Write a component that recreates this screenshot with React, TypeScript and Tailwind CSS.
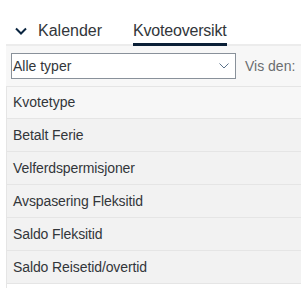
const rows = ["Betalt Ferie", "Velferdspermisjoner", "Avspasering Fleksitid", "Saldo Fleksitid", "Saldo Reisetid/overtid"];

const App = () => {
  return (
    <div className="w-[301px] h-[288px] bg-white flex overflow-hidden font-['Liberation_Sans',Arial,sans-serif] text-[#32363a]">
      <div className="ml-[6px] flex-1 flex flex-col">
        {/* tabs */}
        <div className="h-[46px] flex items-end border-b-[2px] border-[#ececec] pl-[9px]">
          <div className="flex items-end h-[44px] -mb-[2px] pb-[3px] border-b-[2px] border-transparent">
            <svg width="12" height="8" viewBox="0 0 12 8" className="mr-[11px] mb-[6px]">
              <path d="M1 1.5 L6 6.5 L11 1.5" fill="none" stroke="#0a2540" strokeWidth="2" />
            </svg>
            <span className="text-[16px] leading-[20px]">Kalender</span>
          </div>
          <div className="ml-[31px] flex items-end h-[44px] -mb-[2px] pb-[2px] border-b-[3px] border-[#0a1f36]">
            <span className="text-[16px] leading-[20px] tracking-[-0.2px]">Kvoteoversikt</span>
          </div>
        </div>
        {/* toolbar */}
        <div className="bg-[#f7f7f7] flex items-center pl-[5px] pt-[7px] pb-[7px]">
          <div className="w-[225px] h-[26px] bg-white border border-[#89919a] flex items-center justify-between pl-[1px] pr-[6px]">
            <span className="text-[14px]">Alle typer</span>
            <svg width="10" height="6" viewBox="0 0 10 6">
              <path d="M0.5 0.5 L5 5 L9.5 0.5" fill="none" stroke="#5b738b" strokeWidth="1" />
            </svg>
          </div>
          <span className="ml-[9px] text-[14px] text-[#6a6d70] whitespace-nowrap">Vis den:</span>
        </div>
        {/* table */}
        <div className="border-l border-[#e5e5e5]">
          <div className="h-[32px] bg-[#f7f7f7] border-t border-[#e5e5e5] flex items-center pl-[6px] text-[14px]">
            Kvotetype
          </div>
          {rows.map((r) => (
            <div key={r} className="h-[33px] bg-[#f2f2f2] border-t border-[#e5e5e5] flex items-center pl-[6px] text-[14px] tracking-[-0.1px]">
              {r}
            </div>
          ))}
          <div className="border-t border-[#e5e5e5] h-[5px] bg-white" />
        </div>
      </div>
    </div>
  );
};

export default App;
